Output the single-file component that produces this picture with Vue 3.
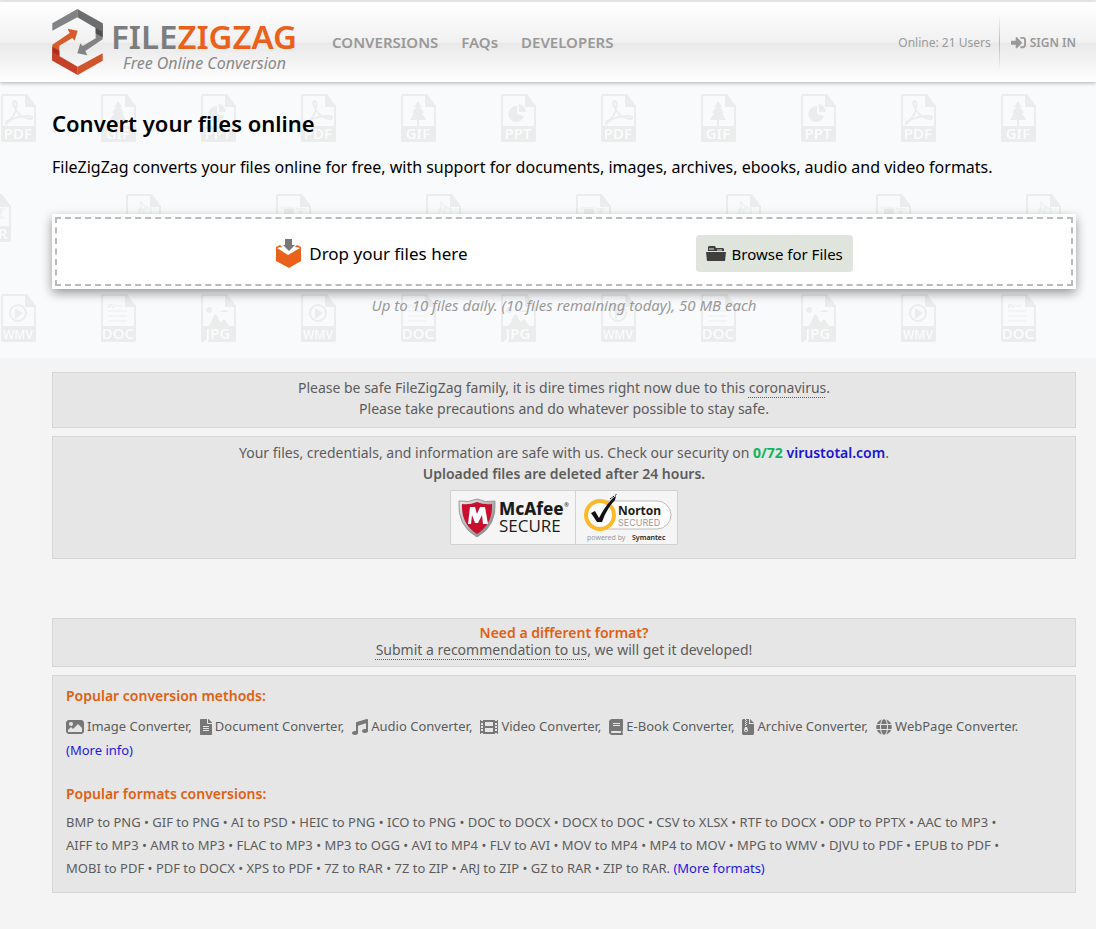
<template>
  <div class="page">
    <header class="header">
      <a href="#" class="brand">
        <svg class="brand-mark" viewBox="0 0 156 204" aria-hidden="true">
          <path fill="#818385" d="M155 46v48l-52 35 6 13-30-6 9-30 7 8 39-23V60z" />
          <path fill="#4c4e4f" d="M134 60l21-8v36l-21-12z" />
          <path fill="#818385" d="M4 46 79 3v25L4 68z" />
          <path fill="#6b6d6e" d="M79 3l76 43v26L79 28z" />
          <path fill="#d65c2b" d="M4 158v-48l52-35-6-13 30 6-9 30-7-8-39 23v31z" />
          <path fill="#a92f20" d="M25 144l-21 8v-36l21 12z" />
          <path fill="#d0552a" d="M155 158l-75 43v-25l75-40z" />
          <path fill="#c64127" d="M80 201L4 158v-26l76 44z" />
        </svg>
        <span class="brand-text">
          <span class="brand-name">FILE<b>ZIGZAG</b></span>
          <span class="brand-slogan">Free Online Conversion</span>
        </span>
      </a>

      <nav class="nav">
        <a v-for="item in menu" :key="item" href="#">{{ item }}</a>
      </nav>

      <div class="user">
        <span class="online">Online: 21 Users</span>
        <a href="#" class="sign-in">
          <svg viewBox="0 0 512 512" aria-hidden="true"><path :d="signInIcon" /></svg>
          SIGN IN
        </a>
      </div>
    </header>

    <section class="hero">
      <svg class="hero-pattern" width="100%" height="100%" aria-hidden="true">
        <defs>
          <g id="sheet">
            <path
              fill-rule="evenodd"
              d="M1 0h25l9 12v35l-1 1H1l-1-1V1zM2 2v30h31V13h-9V2z"
            />
          </g>
          <pattern id="files" width="300" height="300" patternUnits="userSpaceOnUse">
            <g
              v-for="file in files"
              :key="file.label + file.x"
              :transform="`translate(${file.x} ${file.y})`"
            >
              <use href="#sheet" />
              <path v-if="file.fill" :d="file.fill" />
              <path
                v-if="file.line"
                :d="file.line"
                fill="none"
                stroke="#ebeded"
                :stroke-width="file.stroke || 2"
              />
              <text x="17" y="45" :font-size="file.size">{{ file.label }}</text>
            </g>
          </pattern>
        </defs>
        <rect width="100%" height="100%" fill="url(#files)" />
      </svg>

      <div class="hero-content">
        <h1>Convert your files online</h1>
        <p class="intro">
          FileZigZag converts your files online for free, with support for
          documents, images, archives, ebooks, audio and video formats.
        </p>

        <div class="drop-box">
          <div class="drop-area">
            <div class="drop-label">
              <svg viewBox="0 0 27 29" aria-hidden="true">
                <path fill="#e9611a" d="M1 8l4-2 2 2-3 1 10 6 9-6-3-1 2-2 4 2v14l-12 7L1 22z" />
                <path fill="#fff" d="M2 9l3-1 8 5 9-5 3 1-12 7z" />
                <path fill="#777" d="M10 0h7v6h3l-6 6-6-6h2z" />
              </svg>
              Drop your files here
            </div>
            <button type="button" class="browse">
              <svg viewBox="0 0 20 17" aria-hidden="true">
                <path d="M2 6V2l1-1h6l1 2h7l1 1v2z" />
                <path d="M3 4h5M11 5h5" stroke="#dfe5dd" />
                <path d="M0 7h20l-1 9H1z" />
              </svg>
              Browse for Files
            </button>
          </div>
        </div>
        <p class="limit">
          Up to 10 files daily. (10 files remaining today), 50 MB each
        </p>
      </div>
    </section>

    <main class="main">
      <section class="panel notice">
        Please be safe FileZigZag family, it is dire times right now due to this
        <a href="#" class="dotted">coronavirus</a>.<br />
        Please take precautions and do whatever possible to stay safe.
      </section>

      <section class="panel security">
        Your files, credentials, and information are safe with us. Check our
        security on <b class="score">0/72</b> <a href="#" class="virustotal">virustotal.com</a>.<br />
        <strong>Uploaded files are deleted after 24 hours.</strong>
        <div class="badges">
          <a href="#" class="badge" aria-label="McAfee Secure">
            <svg width="124" height="53" viewBox="0 0 124 53">
              <defs>
                <linearGradient id="rim" x2="1" y2="1">
                  <stop offset="0" stop-color="#eee" />
                  <stop offset="1" stop-color="#777" />
                </linearGradient>
              </defs>
              <path
                fill="url(#rim)"
                stroke="#999"
                d="M8 10q10 2 18-2 8 4 18 2 2 25-18 36Q6 35 8 10z"
              />
              <path fill="#c8102e" d="M11 13q8 1 15-2 7 3 15 2 1 20-15 30Q10 33 11 13z" />
              <path fill="#fff" d="M17 33l2-17h5l2 7 3-7h5l3 17h-5l-1-9-4 8h-3l-3-8-1 9z" />
              <text x="48" y="24" font-size="17" font-weight="800">McAfee</text>
              <text x="48" y="41" font-size="17" class="light">SECURE</text>
              <text x="113" y="16" font-size="6">®</text>
            </svg>
          </a>
          <a href="#" class="badge" aria-label="Norton Secured, powered by Symantec">
            <svg width="101" height="53" viewBox="0 0 101 53">
              <rect x="14" y="10" width="81" height="28" rx="14" fill="#fff" stroke="#bbb" />
              <circle cx="24" cy="24" r="14" fill="#fff" stroke="#fdb82b" stroke-width="4" />
              <path fill="#111" d="M15 22l4-2 4 7q6-12 14-20l3-2-1 4Q31 17 26 31h-5z" />
              <path stroke="#111" stroke-dasharray="2 1" d="M34 8l7-5" />
              <text x="42" y="24" font-size="12" font-weight="700">Norton</text>
              <text x="42" y="35" font-size="9" class="gray secured">SECURED</text>
              <text x="11" y="49" font-size="7" class="gray">powered by</text>
              <text x="56" y="49" font-size="7" font-weight="600">Symantec</text>
            </svg>
          </a>
        </div>
      </section>

      <section class="panel request">
        <h2>Need a different format?</h2>
        <a href="#" class="dotted">Submit a recommendation to us</a>, we will
        get it developed!
      </section>

      <section class="panel popular">
        <h2>Popular conversion methods:</h2>
        <div class="methods">
          <a v-for="(method, i) in methods" :key="method.name" href="#" class="method">
            <svg
              :width="method.width"
              height="16"
              :viewBox="method.box"
              aria-hidden="true"
            >
              <path fill-rule="evenodd" :d="method.path" />
            </svg>
            {{ method.name }} Converter{{ i < methods.length - 1 ? "," : "." }}
          </a>
        </div>
        <a href="#" class="more">(More info)</a>

        <h2 class="formats-title">Popular formats conversions:</h2>
        <p class="formats">
          <template v-for="(format, i) in formats" :key="format">
            <a href="#">{{ format }}</a>{{ i < formats.length - 1 ? " • " : ". " }}
          </template>
          <a href="#" class="more">(More formats)</a>
        </p>
      </section>
    </main>
  </div>
</template>

<script setup>
const menu = ["CONVERSIONS", "FAQs", "DEVELOPERS"];

const signInIcon =
  "M416 448h-84c-6.6 0-12-5.4-12-12v-40c0-6.6 5.4-12 12-12h84c17.7 0 32-14.3 32-32V160c0-17.7-14.3-32-32-32h-84c-6.6 0-12-5.4-12-12V76c0-6.6 5.4-12 12-12h84c53 0 96 43 96 96v192c0 53-43 96-96 96zm-47-201L201 79c-15-15-41-4.5-41 17v96H24c-13.3 0-24 10.7-24 24v96c0 13.3 10.7 24 24 24h136v96c0 21.5 26 32 41 17l168-168c9.3-9.4 9.3-24.6 0-34z";

const note = "M15 18V7q1 5 6 6M13 20v-5h3M18 20v-6h7v6";
const layout = "M5 14h13M20 15h9M22 18h5M25 15v8M5 24h24";
const layoutFill = "M8 15h10v6H8z";

// One repeating tile of the hero background
const files = [
  {
    x: 1, y: 12, label: "PDF", size: 15,
    line: "M5 28q6-2 9-10 3-10 0-11-3 0-1 5 4 11 15 13 4 0 3-2-4-2-13 0-9 2-12 6-2 2-1-1z",
  },
  {
    x: 101, y: 12, label: "GIF", size: 15,
    fill: "M17 7l4 6h-2l4 6h-2l4 7h-7v6h-2v-6H9l4-7h-2l4-6h-2z",
  },
  {
    x: 201, y: 12, label: "PPT", size: 15,
    fill: "M16 12v8l7 2a8 8 0 1 1-7-10zM18 10a9 9 0 0 1 7 8h-7z",
  },
  { x: 126, y: 112, label: "MP3", size: 15, line: note, stroke: 1 },
  { x: 276, y: 112, label: "RAR", size: 15, line: layout, stroke: 1, fill: layoutFill },
  { x: -24, y: 112, label: "RAR", size: 15, line: layout, stroke: 1, fill: layoutFill },
  {
    x: 1, y: 212, label: "WMV", size: 12,
    line: "M25 19a8 8 0 1 1-16 0 8 8 0 0 1 16 0",
    fill: "M14 14v11l8-6z",
  },
  {
    x: 101, y: 212, label: "DOC", size: 15, stroke: 1,
    line: "M7 10l1 4 2-4 2 4 1-4M14 12h7M7 17h19M7 22h19M7 27h19",
  },
  {
    x: 201, y: 212, label: "JPG", size: 15,
    fill: "M7 32q3-2 5-9 3-6 6 3l2 2q3-6 6 1l3 4zM5 16a3 3 0 1 1 6 0 3 3 0 0 1-6 0M18 18q6-4 10 0z",
  },
];

const methods = [
  {
    name: "Image", width: 18, box: "0 0 18 16",
    path: "M2 1h14l2 2v10l-2 2H2l-2-2V3zM5 3a2 2 0 1 0 0 4 2 2 0 0 0 0-4zM2 13h14V9l-4-4-5 5-2-2-3 3z",
  },
  {
    name: "Document", width: 12, box: "0 0 384 512",
    path: "M224 136V0H24C10.7 0 0 10.7 0 24v464c0 13.3 10.7 24 24 24h336c13.3 0 24-10.7 24-24V160H248c-13.2 0-24-10.8-24-24zm64 236c0 6.6-5.4 12-12 12H108c-6.6 0-12-5.4-12-12v-8c0-6.6 5.4-12 12-12h168c6.6 0 12 5.4 12 12v8zm0-64c0 6.6-5.4 12-12 12H108c-6.6 0-12-5.4-12-12v-8c0-6.6 5.4-12 12-12h168c6.6 0 12 5.4 12 12v8zm0-72v8c0 6.6-5.4 12-12 12H108c-6.6 0-12-5.4-12-12v-8c0-6.6 5.4-12 12-12h168c6.6 0 12 5.4 12 12zm96-114.1v6.1H256V0h6.1c6.4 0 12.5 2.5 17 7l97.9 98c4.5 4.5 7 10.6 7 16.9z",
  },
  {
    name: "Audio", width: 16, box: "0 0 512 512",
    path: "M511.99 32.01c0-21.71-21.1-37.01-41.6-30.51L150.4 96c-13.3 4.2-22.4 16.5-22.4 30.5v261.42c-10.05-2.38-20.72-3.92-32-3.92-53.02 0-96 28.65-96 64s42.98 64 96 64 96-28.65 96-64V214.31l256-75.02v184.63c-10.05-2.38-20.72-3.92-32-3.92-53.02 0-96 28.65-96 64s42.98 64 96 64 96-28.65 96-64l-.01-351.99z",
  },
  {
    name: "Video", width: 18, box: "0 0 18 16",
    path: "M0 1h1v1h2V1h12v1h2V1h1v14h-1v-1h-2v1H3v-1H1v1H0zM5 3v4h8V3zM5 9v4h8V9zM1 4v2h2V4zM1 7v2h2V7zM1 10v2h2v-2zM15 4v2h2V4zM15 7v2h2V7zM15 10v2h2v-2z",
  },
  {
    name: "E-Book", width: 14, box: "0 0 448 512",
    path: "M448 360V24c0-13.3-10.7-24-24-24H96C43 0 0 43 0 96v320c0 53 43 96 96 96h328c13.3 0 24-10.7 24-24v-16c0-7.5-3.5-14.3-8.9-18.7-4.2-15.4-4.2-59.3 0-74.7 5.4-4.3 8.9-11.1 8.9-18.6zM128 134c0-3.3 2.7-6 6-6h212c3.3 0 6 2.7 6 6v20c0 3.3-2.7 6-6 6H134c-3.3 0-6-2.7-6-6v-20zm0 64c0-3.3 2.7-6 6-6h212c3.3 0 6 2.7 6 6v20c0 3.3-2.7 6-6 6H134c-3.3 0-6-2.7-6-6v-20zm253.4 250H96c-17.7 0-32-14.3-32-32 0-17.6 14.4-32 32-32h285.4c-1.9 17.1-1.9 46.9 0 64z",
  },
  {
    name: "Archive", width: 12, box: "0 0 12 16",
    path: "M1 0h2v1h1V0h3v5h5v10l-1 1H1l-1-1V1zM8 0l4 4H8zM4 1v1h1V1zM3 2v1h1V2zM4 3v1h1V3zM3 4v1h1V4zM4 5v1h1V5zM3 6v1h1V6zM3 8l-1 3q0 2 2 2t2-2L5 8zM3 11h2v1H3z",
  },
  {
    name: "WebPage", width: 16, box: "0 0 496 512",
    path: "M336.5 160C322 70.7 287.8 8 248 8s-74 62.7-88.5 152h177zM152 256c0 22.2 1.2 43.5 3.3 64h185.3c2.1-20.5 3.3-41.8 3.3-64s-1.2-43.5-3.3-64H155.3c-2.1 20.5-3.3 41.8-3.3 64zm324.7-96c-28.6-67.9-86.5-120.4-158-141.6 24.4 33.8 41.2 84.7 50 141.6h108zM177.2 18.4C105.8 39.6 47.8 92.1 19.3 160h108c8.7-56.9 25.5-107.8 49.9-141.6zM487.4 192H372.7c2.1 21 3.3 42.5 3.3 64s-1.2 43-3.3 64h114.6c5.5-20.5 8.6-41.8 8.6-64s-3.1-43.5-8.5-64zM120 256c0-21.5 1.2-43 3.3-64H8.6C3.2 212.5 0 233.8 0 256s3.2 43.5 8.6 64h114.6c-2-21-3.2-42.5-3.2-64zm39.5 96c14.5 89.3 48.7 152 88.5 152s74-62.7 88.5-152h-177zm159.3 141.6c71.4-21.2 129.4-73.7 158-141.6h-108c-8.8 56.9-25.6 107.8-50 141.6zM19.3 352c28.6 67.9 86.5 120.4 158 141.6-24.4-33.8-41.2-84.7-50-141.6h-108z",
  },
];

const formats = [
  "BMP to PNG", "GIF to PNG", "AI to PSD", "HEIC to PNG", "ICO to PNG",
  "DOC to DOCX", "DOCX to DOC", "CSV to XLSX", "RTF to DOCX", "ODP to PPTX",
  "AAC to MP3", "AIFF to MP3", "AMR to MP3", "FLAC to MP3", "MP3 to OGG",
  "AVI to MP4", "FLV to AVI", "MOV to MP4", "MP4 to MOV", "MPG to WMV",
  "DJVU to PDF", "EPUB to PDF", "MOBI to PDF", "PDF to DOCX", "XPS to PDF",
  "7Z to RAR", "7Z to ZIP", "ARJ to ZIP", "GZ to RAR", "ZIP to RAR",
];
</script>

<style>
body {
  background-color: #f4f4f4;
}
</style>

<style scoped>
.page {
  font-family: "Noto Sans", sans-serif;
  font-size: 14px;
  color: #5c5c5c;
}

a {
  color: inherit;
  text-decoration: none;
}

h1,
h2,
p {
  margin: 0;
}

.header {
  position: relative;
  z-index: 1;
  display: flex;
  align-items: center;
  height: 80px;
  margin-top: 1px;
  padding: 0 20px 0 51px;
  border-top: 1px solid #e4e4e4;
  background: linear-gradient(#fff, #f1f1f1 50%, #e9e9e9 52%, #fff);
  box-shadow: 0 1px 4px rgba(0, 0, 0, 0.3);
}

.brand {
  display: flex;
  gap: 8px;
}

.brand-mark {
  width: 52px;
  height: 68px;
}

.brand-text {
  display: flex;
  flex-direction: column;
  padding-top: 11px;
}

.brand-name {
  font-size: 33px;
  line-height: 36px;
  font-weight: 600;
  color: #7b7d7f;
}

.brand-name b {
  font-weight: 600;
  color: #eb611b;
}

.brand-slogan {
  padding-left: 12px;
  font-size: 16px;
  line-height: 16px;
  font-style: italic;
  color: #8a8a8a;
}

.nav {
  display: flex;
  gap: 23px;
  margin-left: 35px;
  font-size: 15px;
  font-weight: 600;
  color: #999;
}

.user {
  display: flex;
  align-items: center;
  margin-left: auto;
  color: #999;
}

.online {
  padding-right: 8px;
  font-size: 12px;
}

.sign-in {
  display: flex;
  align-items: center;
  gap: 4px;
  padding: 18px 0 18px 11px;
  border-left: 1px solid;
  border-image: linear-gradient(transparent, #bbb, transparent) 1;
  font-size: 12px;
  font-weight: 600;
}

.sign-in svg {
  width: 15px;
  height: 15px;
  fill: currentColor;
}

.hero {
  position: relative;
  background-color: #f9fafc;
  color: #000;
}

.hero-pattern {
  position: absolute;
  inset: 0;
  fill: #ebeded;
}

.hero-pattern text {
  fill: #fafbfc;
  font-weight: 600;
  text-anchor: middle;
}

.hero-content {
  position: relative;
  padding: 25px 20px 43px 52px;
}

h1 {
  font-size: 22px;
  line-height: 32px;
  font-weight: 600;
}

.intro {
  margin: 16px 0 35px;
  font-size: 16px;
  line-height: 24px;
}

.drop-box {
  padding: 3px;
  background-color: #fff;
  box-shadow: 0 4px 10px rgba(0, 0, 0, 0.4);
}

.drop-area {
  display: flex;
  flex-wrap: wrap;
  align-items: center;
  justify-content: center;
  gap: 12px 228px;
  padding: 16px 0 12px;
  border: 2px dashed #bbb;
}

.drop-label {
  display: flex;
  align-items: center;
  gap: 7px;
  font-size: 17px;
}

.drop-label svg {
  width: 27px;
  height: 29px;
}

.browse {
  display: flex;
  align-items: center;
  gap: 6px;
  height: 37px;
  padding: 0 10px;
  border: none;
  border-radius: 4px;
  background-color: #dfe5dd;
  font-family: inherit;
  font-size: 15px;
  cursor: pointer;
}

.browse svg {
  width: 20px;
  height: 17px;
  fill: #3f3f3f;
}

.limit {
  margin-top: 6px;
  font-size: 15px;
  line-height: 20px;
  font-style: italic;
  text-align: center;
  color: #999;
}

.main {
  padding: 14px 20px 36px 52px;
}

.panel {
  margin-bottom: 8px;
  border: 1px solid #d6d6d6;
  background-color: #e6e6e6;
  text-align: center;
  line-height: 21px;
}

.panel h2 {
  font-size: 14px;
  font-weight: 600;
  color: #e06014;
}

.notice {
  padding: 4px 12px 8px;
}

.dotted {
  text-decoration: underline dotted 1px;
  text-underline-offset: 4px;
}

.security {
  margin-bottom: 59px;
  padding: 5px 12px 13px;
}

.security strong {
  font-weight: 600;
}

.score {
  color: #12b55a;
}

.virustotal {
  font-weight: 600;
  color: #1a14d8;
}

.badges {
  display: flex;
  justify-content: center;
  margin-top: 6px;
}

.badge {
  border: 1px solid #d2d2d2;
  background-color: #f5f5f5;
}

.badge + .badge {
  border-left: none;
}

.badge svg {
  display: block;
  fill: #1c1c1c;
}

.badge .light {
  font-family: "Open Sans", sans-serif;
}

.badge .gray {
  fill: #999;
}

.badge .secured {
  font-family: Inter, sans-serif;
}

.request {
  padding: 5px 12px 8px;
  line-height: 17px;
}

.request h2 {
  line-height: 17px;
}

.popular {
  padding: 8px 13px 12px;
  text-align: left;
  font-size: 13px;
  line-height: 23px;
}

.methods {
  display: flex;
  flex-wrap: wrap;
  column-gap: 8px;
  margin-top: 7px;
  line-height: 25px;
}

.method {
  display: flex;
  align-items: center;
  gap: 3px;
}

.method svg {
  fill: #777;
}

.more {
  color: #1f18e0;
}

.popular .formats-title {
  margin-top: 20px;
}

.formats {
  margin-top: 6px;
}

.formats a {
  white-space: nowrap;
}
</style>
